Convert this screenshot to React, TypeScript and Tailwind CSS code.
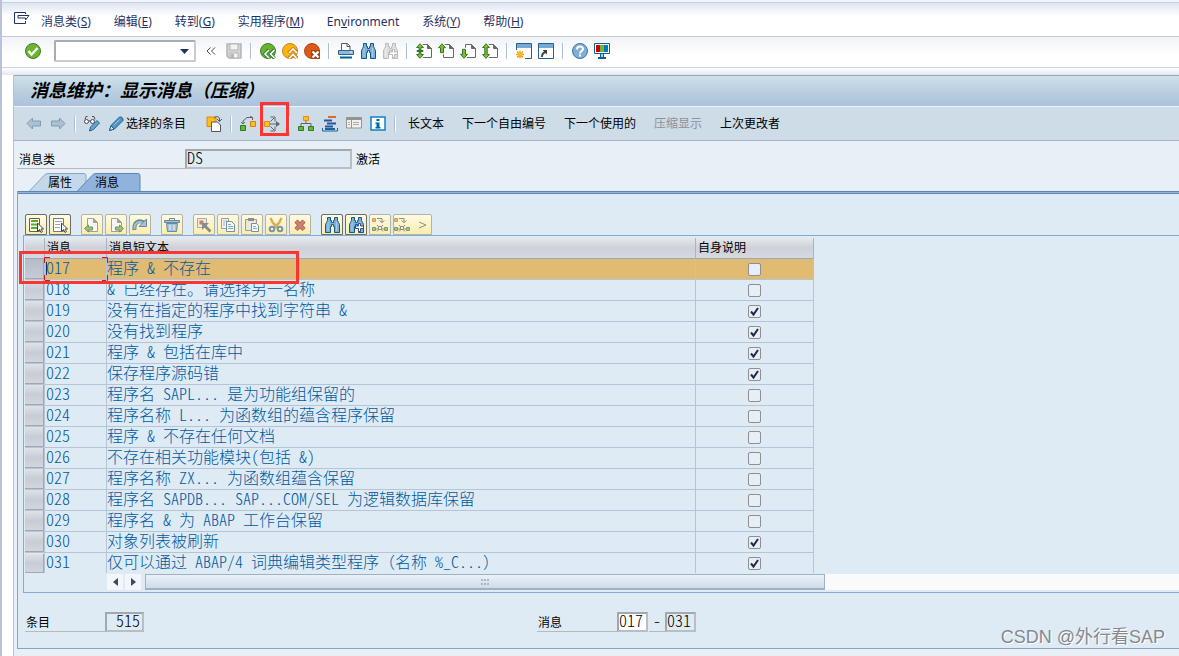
import { useState, type ReactNode } from 'react';
import clsx from 'clsx';

type MessageRow = { id: string; text: string; self: boolean };

const MESSAGES: MessageRow[] = [
  { id: '017', text: '程序 & 不存在', self: false },
  { id: '018', text: '& 已经存在。请选择另一名称', self: false },
  { id: '019', text: '没有在指定的程序中找到字符串 &', self: true },
  { id: '020', text: '没有找到程序', self: true },
  { id: '021', text: '程序 & 包括在库中', self: true },
  { id: '022', text: '保存程序源码错', self: true },
  { id: '023', text: '程序名 SAPL... 是为功能组保留的', self: false },
  { id: '024', text: '程序名称 L... 为函数组的蕴含程序保留', self: false },
  { id: '025', text: '程序 & 不存在任何文档', self: false },
  { id: '026', text: '不存在相关功能模块(包括 &)', self: false },
  { id: '027', text: '程序名称 ZX... 为函数组蕴含保留', self: false },
  { id: '028', text: '程序名 SAPDB... SAP...COM/SEL 为逻辑数据库保留', self: false },
  { id: '029', text: '程序名 & 为 ABAP 工作台保留', self: false },
  { id: '030', text: '对象列表被刷新', self: true },
  { id: '031', text: '仅可以通过 ABAP/4 词典编辑类型程序（名称 %_C...）', self: true },
];

const MENUS = [
  { label: '消息类', hotkey: 'S' },
  { label: '编辑', hotkey: 'E' },
  { label: '转到', hotkey: 'G' },
  { label: '实用程序', hotkey: 'M' },
  { label: 'Environment', hotkey: '' },
  { label: '系统', hotkey: 'Y' },
  { label: '帮助', hotkey: 'H' },
];

// Half-width latin next to full-width CJK, like a terminal grid
const GRID_TEXT = "font-['Noto_Sans_CJK_SC',sans-serif] [font-feature-settings:'hwid'] font-light text-base";

function Icon({ children, className }: { children: ReactNode; className?: string }) {
  return (
    <svg viewBox="0 0 16 16" className={clsx('h-4 w-4 shrink-0', className)} fill="none" aria-hidden="true">
      {children}
    </svg>
  );
}

function IconButton({ label, children }: { label: string; children: ReactNode }) {
  return (
    <button type="button" aria-label={label} title={label} className="relative block shrink-0">
      {children}
    </button>
  );
}

function Separator({ className }: { className?: string }) {
  return <div className={clsx('h-4 w-0.5 shrink-0 border-r border-white bg-[#a9c0d8]', className)} />;
}

/* ---------- system toolbar icons ---------- */

const OkIcon = () => (
  <Icon>
    <circle cx="8" cy="8" r="7.5" fill="#6cb52d" stroke="#3a7d33" />
    <path d="M3.5 8l3 3.5 6-6.5" stroke="#fff" strokeWidth="2.4" />
  </Icon>
);

const SaveIcon = () => (
  <Icon>
    <path d="M1 1h14v14H3l-2-2z" fill="#d3d4d5" stroke="#b3b5b8" strokeWidth="1.5" />
    <path d="M4 1h8v6H4z" fill="#f3f3f3" stroke="#b3b5b8" />
    <path d="M4 10h8v5H4z" fill="#f3f3f3" stroke="#b3b5b8" />
    <path d="M5 11h3v4H5z" fill="#b3b5b8" />
  </Icon>
);

const BackIcon = () => (
  <Icon>
    <circle cx="8" cy="8" r="7.5" fill="#69b42d" stroke="#3c8136" />
    <path d="M9 6.5L5 11l4 4.5M14.5 6.5L10.5 11l4 4.5" stroke="#3c8136" strokeWidth="3.5" />
    <path d="M9 7l-4 4 4 4M14.5 7l-4 4 4 4" stroke="#fff" strokeWidth="1.6" />
  </Icon>
);

const ExitIcon = () => (
  <Icon>
    <circle cx="8" cy="8" r="7.5" fill="#fbb50f" stroke="#cf7d16" />
    <path d="M6.5 10l4.500-4 4.500 4M6.500 15.500l4.500-4 4.500 4" stroke="#cf7d16" strokeWidth="3.5" />
    <path d="M7 10l4-4 4 4M7 15.500l4-4 4 4" stroke="#fff" strokeWidth="1.6" />
  </Icon>
);

const CancelIcon = () => (
  <Icon>
    <circle cx="8" cy="8" r="7.5" fill="#dd5914" stroke="#a84620" />
    <path d="M7 7h9v9H7z" fill="#a8431c" />
    <path d="M8.5 8.5l6 6M14.5 8.5l-6 6" stroke="#fff" strokeWidth="2.2" />
  </Icon>
);

const PrintIcon = () => (
  <Icon>
    <path d="M3.5 7V.5h6l2.500 2.500v4" fill="#fff" stroke="#595b5e" />
    <path d="M9 .5V3.500h3" stroke="#595b5e" />
    <path d="M.5 7.5h15v4H.5z" fill="#8fb8dc" stroke="#2a6691" />
    <path d="M12 8.500h2v1h-2z" fill="#fff" />
    <path d="M2 14.500h12" stroke="#00608f" strokeWidth="2" />
  </Icon>
);

function FindIcon({ dim, next }: { dim?: boolean; next?: boolean }) {
  const stroke = dim ? '#b9bbbd' : '#0b5c8a';
  const fill = dim ? '#dddedf' : '#7fb0d8';
  return (
    <Icon>
      <path
        d="M3.5.5h3v3h1v2h2v-2h1v-3h3v3l1 2 1 2v8h-5V9.500h-1v-2h-2v2h-1v6h-5v-8l1-2 1-2z"
        fill={fill}
        stroke={stroke}
      />
      <path d="M4 5v9M12.500 5v9" stroke={dim ? '#f0f0f0' : '#aacdea'} />
      {next && (
        <path
          d="M10.500 6.500h2v2.500h3v2.500h-3v3h-2v-3h-3V9h3z"
          fill="#fff"
          stroke={dim ? '#b9bbbd' : '#2d4f93'}
        />
      )}
    </Icon>
  );
}

const PAGE_ARROWS = {
  first: 'M4 .7l3.500 3.800H5v2H3v-2H.5zM4 15.300L.5 11.500H3v-2h2v2h2.500zM1 7.500h6v1H1z',
  prev: 'M4 .7l3.500 4H5.500v5h-3v-5H.5z',
  next: 'M4 15.300l3.500-4H5.500v-5h-3v5H.5z',
  last: 'M4 .7l3.500 3.800H5.200v7h2.300L4 15.300.5 11.500h2.300v-7H.5z',
};

function PageIcon({ kind }: { kind: keyof typeof PAGE_ARROWS }) {
  return (
    <Icon>
      <path d="M5.5 1.500h6l4 4v9h-10z" fill="#fff" stroke="#67696c" />
      <path d="M11.500 1.500l4 4h-4z" fill="#67696c" stroke="#67696c" />
      <path d={PAGE_ARROWS[kind]} fill="#fff" stroke="#fff" strokeWidth="3" />
      <path d={PAGE_ARROWS[kind]} fill="#82bb2d" stroke="#2f7a2c" />
    </Icon>
  );
}

const NewSessionIcon = () => (
  <Icon>
    <path d="M.5.5h15v15H.5z" fill="#fff" stroke="#23638f" />
    <path d="M1 1h14v4H1z" fill="#77a9d3" />
    <path d="M0 7h9v9H0z" fill="#fff" />
    <path d="M4 7.500v8M0 11.500h8M1 8.500l6 6M7 8.500l-6 6" stroke="#f39a0d" strokeWidth="1.300" />
    <circle cx="4" cy="11.500" r="2.300" fill="#fbb820" />
  </Icon>
);

const ShortcutIcon = () => (
  <Icon>
    <path d="M.5.5h15v15H.5z" fill="#fff" stroke="#23638f" />
    <path d="M1 1h14v4H1z" fill="#77a9d3" />
    <path d="M4 14c0-3 1-4.500 4-5" stroke="#3d3f42" strokeWidth="1.800" />
    <path d="M4.500 7h4.500v4.500z" fill="#3d3f42" />
  </Icon>
);

const HelpIcon = () => (
  <Icon>
    <circle cx="8" cy="8" r="7.5" fill="#80afd6" stroke="#3c75a3" />
    <path d="M5 6.500c0-4 6-4 6-.5 0 2-3 2-3 4.500M8 11.500v2" stroke="#fff" strokeWidth="2" />
  </Icon>
);

const MonitorIcon = () => (
  <Icon>
    <path d="M.5.5h15v10H.5z" fill="#fff" stroke="#125f8f" />
    <path d="M2 2h4v7H2z" fill="#d10000" />
    <path d="M6 2h4v7H6z" fill="#76b82a" />
    <path d="M10 2h4v7h-4z" fill="#0079c1" />
    <path d="M6 11h4v3h2v2H4v-2h2z" fill="#125f8f" />
    <path d="M7 11h2v3H7z" fill="#a8cbe6" />
  </Icon>
);

/* ---------- application toolbar icons ---------- */

function ArrowIcon({ flip }: { flip?: boolean }) {
  return (
    <Icon>
      <path
        d={flip ? 'M15 7.500L9.500 2v3H1.500v5h8v3z' : 'M1 7.500L6.500 2v3h8v5h-8v3z'}
        fill="#a9c1d1"
        stroke="#7f9db3"
      />
    </Icon>
  );
}

const DisplayChangeIcon = () => (
  <Icon>
    <path d="M1 3.500L2 .5h1.500M11 3.500L10 .5H8" stroke="#4b4d50" />
    <circle cx="2.5" cy="5.500" r="2" fill="#fff" stroke="#4b4d50" />
    <circle cx="8.5" cy="5.500" r="2" fill="#fff" stroke="#4b4d50" />
    <path d="M4.500 5h2" stroke="#4b4d50" />
    <path d="M5.500 15l1-4L13 4.500 15.500 7 9.500 13.500z" fill="#69a4d1" stroke="#22648f" />
  </Icon>
);

const PencilIcon = () => (
  <Icon>
    <path d="M1.500 14.500l1.500-5L10.500 2l1-1h2l1.500 2v1.500L6.500 13z" fill="#5595c4" stroke="#1c6292" />
    <path d="M1.500 14.500l1.500-4.500 3 3z" fill="#eaf2f8" stroke="#1c6292" />
    <path d="M6 9l5.500-5.500" stroke="#9cc5e4" />
  </Icon>
);

const CopyAsIcon = () => (
  <Icon>
    <path d="M1 1h9v9.500H1z" fill="#fdbd1d" stroke="#d88a0e" />
    <path d="M5.500 6h6l3 3v6.500h-9z" fill="#fff" stroke="#55575a" />
    <path d="M8.500 2.500c0-3 5-2.500 5 .500v2M11 3l2.500 2.500L16 3" stroke="#55575a" />
  </Icon>
);

const WhereUsedIcon = () => (
  <Icon>
    <path d="M.5 9.500h5v5h-5z" fill="#6cb32e" stroke="#2f7b2d" />
    <path d="M10.500 5.500h5v5h-5z" fill="#fcc21f" stroke="#e2761a" />
    <path d="M3 8V5l4-3.500h5.500V4M1 6l2 2 2-2M10 0l2.500 1.500" stroke="#626467" />
  </Icon>
);

const TransportIcon = () => (
  <Icon>
    <path d="M.5 5.500h5v5h-5z" fill="#fcc21f" stroke="#e58c1d" />
    <path d="M6 8h9M6.500 5.500L10 2M6.500 10.500L10 14" stroke="#626467" />
    <path d="M12 5v6l4-3z" fill="#626467" />
    <path d="M6.500 1h4.500v4.500M6.500 15h4.500v-4.500" stroke="#626467" />
  </Icon>
);

const HierarchyIcon = () => (
  <Icon>
    <path d="M8 5v3M3 11V7.500h10V11" stroke="#626467" />
    <path d="M5.500.5h5v4h-5z" fill="#fcc21f" stroke="#e58c1d" />
    <path d="M.5 10.500h5v4h-5zM10.500 10.500h5v4h-5z" fill="#6cb32e" stroke="#2f7b2d" />
  </Icon>
);

const StackIcon = () => (
  <Icon>
    <path d="M6 1h8" stroke="#dd6b22" strokeWidth="2" />
    <path d="M2 4.500h8M5 7.500h9M3 10.500h8" stroke="#2355a0" strokeWidth="2" />
    <path d="M.5 12v3h15v-3" stroke="#17639a" />
    <path d="M3 13h10" stroke="#17639a" strokeWidth="2" />
  </Icon>
);

const DetailListIcon = () => (
  <Icon>
    <path d="M.5 1.500h15v10.500H.5z" fill="#f1f0ee" stroke="#97938f" />
    <path d="M1 3h14" stroke="#97938f" strokeWidth="2" />
    <path d="M5.500 3v9" stroke="#97938f" />
    <path d="M2 6.500h2M2 8.500h2M7 6.500h6M7 8.500h6" stroke="#b0aca8" />
  </Icon>
);

const InfoIcon = () => (
  <Icon>
    <path d="M1 1h14v13H1z" fill="#fff" stroke="#0a83c6" strokeWidth="1.5" />
    <path d="M6.500 3h3v2h-3zM5.500 6.500h4v4.500h1v1.500h-5V11h1V8h-1z" fill="#0067a5" />
  </Icon>
);

/* ---------- grid toolbar icons ---------- */

const SelectAllIcon = () => (
  <Icon>
    <path d="M1.500 1.500h10v13h-10z" fill="#fff" stroke="#56702e" />
    <path d="M3 4h7M3 7.500h7M3 11h7" stroke="#5cab27" strokeWidth="2" />
    <path d="M9.500 6v8.500l2-2 1.500 3 1.500-1-1.500-2.500h2.500z" fill="#fff" stroke="#444" />
  </Icon>
);

const DeselectIcon = () => (
  <Icon>
    <path d="M1.500 1.500h10v13h-10z" fill="#fff" stroke="#77797b" />
    <path d="M3 4.500h7M3 7.500h5M3 10.500h5" stroke="#a2a4a6" />
    <path d="M9.500 6v8.500l2-2 1.500 3 1.500-1-1.500-2.500h2.500z" fill="#fff" stroke="#444" />
  </Icon>
);

function DocArrowIcon({ right }: { right?: boolean }) {
  return (
    <Icon>
      <path d="M3.500 1.500h6l4 4v9h-10z" fill="#f7f7f3" stroke="#9c9e9c" />
      <path d="M9.500 1.500v4h4" fill="#9c9e9c" stroke="#9c9e9c" />
      <path
        d={right ? 'M15.500 11.500l-4-3.500v2h-4v3h4v2z' : 'M.5 11.500l4-3.500v2h4v3h-4v2z'}
        fill="#9dc27b"
        stroke="#70965f"
      />
    </Icon>
  );
}

const RedoIcon = () => (
  <Icon>
    <path d="M2.500 13C1.500 5 7 2.500 12 5.500" stroke="#668ba1" strokeWidth="4" />
    <path d="M2.500 12C2 5.500 7 3.500 12 6.500" stroke="#a6c2d4" strokeWidth="2" />
    <path d="M14.500 2v7.500H7z" fill="#a6c2d4" stroke="#668ba1" />
  </Icon>
);

const TrashIcon = () => (
  <Icon>
    <path d="M5.500 3V1.500h5V3" stroke="#668ba1" />
    <path d="M.5 3.500h15v2H.5z" fill="#a6c2d4" stroke="#668ba1" />
    <path d="M2.500 6.500h11l-1 8h-9z" fill="#a6c2d4" stroke="#668ba1" />
    <path d="M6 8v5M10 8v5" stroke="#f5f8fa" />
  </Icon>
);

const PickIcon = () => (
  <Icon>
    <path d="M1.500 1.500h9v9h-9z" fill="#ecebe4" stroke="#aaa9a4" />
    <path d="M3.500 3.500h4v4h-4z" fill="#cf7b6b" />
    <path d="M6 6h7l-2.500 2.500 5 5-2 2-5-5L6 13z" fill="#8b8b89" />
  </Icon>
);

const CopyIcon = () => (
  <Icon>
    <path d="M1.500 1.500h7v10h-7z" fill="#f3f4f0" stroke="#8fa1ac" />
    <path d="M3 4h4M3 6h2M3 8h2" stroke="#9cb3c1" />
    <path d="M6.500 4.500h5l3 3v7h-8z" fill="#f5f6f4" stroke="#7190a3" />
    <path d="M8 7.500h3M8 9.500h5M8 11.500h5" stroke="#8aa9bb" />
  </Icon>
);

const PasteIcon = () => (
  <Icon>
    <path d="M1.500 2.500h11v11h-11z" fill="#e9e8df" stroke="#9b9b97" />
    <path d="M4 1h6v3H4z" fill="#8e8f8d" />
    <path d="M7.500 6.500h5l2 2v6h-7z" fill="#f5f6f4" stroke="#7190a3" />
    <path d="M9 9.500h3M9 11.500h4" stroke="#8aa9bb" />
  </Icon>
);

const CutIcon = () => (
  <Icon>
    <path d="M2.500 1l2.500 5 5 5M13.500 1L11 6l-5 5" stroke="#dbad55" strokeWidth="2.500" />
    <circle cx="4" cy="12" r="2.300" stroke="#7797a8" strokeWidth="2" />
    <circle cx="12" cy="12" r="2.300" stroke="#7797a8" strokeWidth="2" />
  </Icon>
);

const DeleteIcon = () => (
  <Icon>
    <path d="M4 4l8 8.500M12 4l-8 8.500" stroke="#a8675a" strokeWidth="4.500" />
    <path d="M4 4l8 8.500M12 4l-8 8.500" stroke="#cf826f" strokeWidth="2.500" />
  </Icon>
);

const ExpandIcon = () => (
  <Icon>
    <path d="M.5 1.500h3v3h-3z" fill="#f0b56f" stroke="#d39a72" />
    <path d="M.5 10.500h3v3h-3zM12.500 10.500h3v3h-3z" fill="#a6c486" stroke="#7c9c6c" />
    <path d="M5 1.500h5v4M7.500 3.500l2.500 2 2.500-2M5 8l6 6.500M11 8l-6 6.500M4 12h8" stroke="#8c8d8b" />
    <path d="M6.500 9.500h3v3h-3z" fill="#fff6cf" stroke="#8c8d8b" />
  </Icon>
);

type GridTool = { label: string; icon: ReactNode; active?: boolean; more?: boolean };

const GRID_TOOLS: GridTool[][] = [
  [
    { label: '全选', icon: <SelectAllIcon />, active: true },
    { label: '取消全选', icon: <DeselectIcon />, active: true },
  ],
  [
    { label: '上一页', icon: <DocArrowIcon /> },
    { label: '下一页', icon: <DocArrowIcon right /> },
    { label: '重做', icon: <RedoIcon /> },
  ],
  [{ label: '删除行', icon: <TrashIcon /> }],
  [
    { label: '选择', icon: <PickIcon /> },
    { label: '复制', icon: <CopyIcon /> },
    { label: '粘贴', icon: <PasteIcon /> },
    { label: '剪切', icon: <CutIcon /> },
    { label: '删除', icon: <DeleteIcon /> },
  ],
  [
    { label: '查找', icon: <FindIcon />, active: true },
    { label: '查找下一个', icon: <FindIcon next />, active: true },
    { label: '展开', icon: <ExpandIcon /> },
    { label: '更多', icon: <ExpandIcon />, more: true },
  ],
];

function MenuBar() {
  return (
    <nav className="flex h-[34px] items-center gap-[11px] border-b border-[#c3c9d3] bg-linear-to-b from-[#dde5f1] to-white to-40% pl-3 pt-1 text-[#1f3265]">
      <svg viewBox="0 0 16 12" className="-mt-2 h-3 w-4" fill="none" aria-hidden="true">
        <path d="M11.500 2V.5H.5v11h11V9" fill="#fff" stroke="#1f3265" />
        <path d="M4 3.500h11L11.500 8v-2H4z" fill="#fff" stroke="#1f3265" />
      </svg>
      <ul className="flex items-center gap-[23px]">
        {MENUS.map(menu => (
          <li key={menu.label}>
            <button type="button" className="block whitespace-nowrap leading-4">
              {menu.hotkey ? (
                <>
                  {menu.label}(<u>{menu.hotkey}</u>)
                </>
              ) : (
                <>
                  En<u>v</u>ironment
                </>
              )}
            </button>
          </li>
        ))}
      </ul>
    </nav>
  );
}

function SystemToolbar() {
  const [command, setCommand] = useState('');

  return (
    <div className="flex h-[31px] items-center gap-1.5 border-b border-[#cdd3da] bg-linear-to-b from-[#f1f3f8] to-white to-60% pb-0.5 pl-[23px]">
      <IconButton label="回车"><OkIcon /></IconButton>
      <div className="ml-[7px] flex h-[22px] w-[142px] shrink-0 items-center rounded-xs border-2 border-[#a9adb2] border-b-[#c9ccd0] border-r-[#c9ccd0] bg-white">
        <input
          aria-label="命令"
          value={command}
          onChange={e => setCommand(e.target.value)}
          className="h-full min-w-0 flex-1 px-1 outline-none"
        />
        <button type="button" aria-label="历史" className="flex h-full w-5 items-center justify-center">
          <svg viewBox="0 0 9 5" className="h-[5px] w-[9px]" aria-hidden="true">
            <path d="M0 0h9L4.500 5z" fill="#1f3265" />
          </svg>
        </button>
      </div>
      <button type="button" aria-label="收起" className="mx-1 block">
        <svg viewBox="0 0 10 8" className="h-2 w-2.5" fill="none" stroke="#4a4c50" aria-hidden="true">
          <path d="M4.500.5L1 4l3.500 3.500M9 .5L5.500 4 9 7.500" />
        </svg>
      </button>
      <IconButton label="保存"><SaveIcon /></IconButton>
      <Separator className="mx-0.5" />
      <IconButton label="返回"><BackIcon /></IconButton>
      <IconButton label="退出"><ExitIcon /></IconButton>
      <IconButton label="取消"><CancelIcon /></IconButton>
      <Separator className="mx-0.5" />
      <IconButton label="打印"><PrintIcon /></IconButton>
      <IconButton label="查找"><FindIcon /></IconButton>
      <IconButton label="查找下一个"><FindIcon dim next /></IconButton>
      <Separator className="mx-0.5" />
      <IconButton label="第一页"><PageIcon kind="first" /></IconButton>
      <IconButton label="上一页"><PageIcon kind="prev" /></IconButton>
      <IconButton label="下一页"><PageIcon kind="next" /></IconButton>
      <IconButton label="最后一页"><PageIcon kind="last" /></IconButton>
      <Separator className="mx-0.5" />
      <IconButton label="新建会话"><NewSessionIcon /></IconButton>
      <IconButton label="创建快捷方式"><ShortcutIcon /></IconButton>
      <Separator className="mx-0.5" />
      <IconButton label="帮助"><HelpIcon /></IconButton>
      <IconButton label="定制布局"><MonitorIcon /></IconButton>
    </div>
  );
}

function AppToolbar() {
  return (
    <div className="flex h-[34px] items-center gap-2 border-b border-[#a3b6cd] bg-[#cedce7] pl-3 text-black">
      <IconButton label="上一个"><ArrowIcon /></IconButton>
      <IconButton label="下一个"><ArrowIcon flip /></IconButton>
      <Separator />
      <IconButton label="显示/更改"><DisplayChangeIcon /></IconButton>
      <button type="button" className="flex items-center gap-0.5 whitespace-nowrap leading-4">
        <PencilIcon />
        选择的条目
      </button>
      <div className="w-1" />
      <IconButton label="复制为"><CopyAsIcon /></IconButton>
      <Separator />
      <IconButton label="使用处列表"><WhereUsedIcon /></IconButton>
      <IconButton label="传输">
        <TransportIcon />
        <span className="pointer-events-none absolute -left-1 -top-3.5 h-[34px] w-[29px] border-3 border-[#fb3532]" />
      </IconButton>
      <Separator />
      <IconButton label="层次"><HierarchyIcon /></IconButton>
      <IconButton label="堆栈"><StackIcon /></IconButton>
      <IconButton label="明细"><DetailListIcon /></IconButton>
      <IconButton label="信息"><InfoIcon /></IconButton>
      <Separator />
      <div className="flex gap-[18px] whitespace-nowrap pl-1 leading-4">
        <button type="button">长文本</button>
        <button type="button">下一个自由编号</button>
        <button type="button">下一个使用的</button>
        <button type="button" disabled className="text-[#8c9298]">压缩显示</button>
        <button type="button">上次更改者</button>
      </div>
    </div>
  );
}

function TabStrip() {
  return (
    <div role="tablist" className="flex pl-3 leading-4">
      <button type="button" role="tab" aria-selected="false" className="relative h-[18px] w-[58px] pl-1 pt-0.5">
        <svg viewBox="0 0 58 18" className="absolute inset-0 h-full w-full" aria-hidden="true">
          <path d="M.5 18L15 2.500Q16.500.5 19 .5H55q2 0 2 2V18" fill="#c3d8ea" stroke="#8ba6c3" />
        </svg>
        <span className="relative">属性</span>
      </button>
      <button type="button" role="tab" aria-selected="true" className="relative -ml-2.5 h-[18px] w-16 pr-1 pt-0.5">
        <svg viewBox="0 0 64 18" className="absolute inset-0 h-full w-full" aria-hidden="true">
          <path d="M.5 18L15 2.500Q16.500.5 19 .5H61q2 0 2 2V18" fill="#8fb3dc" stroke="#5f86b0" />
        </svg>
        <span className="relative">消息</span>
      </button>
    </div>
  );
}

function GridToolbar() {
  return (
    <div className="flex gap-2.5 pl-[7px]">
      {GRID_TOOLS.map((group, i) => (
        <div key={i} className="flex gap-0.5">
          {group.map(tool => (
            <button
              key={tool.label}
              type="button"
              aria-label={tool.label}
              title={tool.label}
              className={clsx(
                'flex h-[21px] items-center rounded-t-xs border bg-linear-to-b from-[#fffbe2] to-[#fbecae]',
                tool.active ? 'border-[#6f6e68]' : 'border-[#b4b3a8]',
                tool.more ? 'w-[39px] justify-between pr-1' : 'w-[22px] justify-center',
              )}
            >
              {tool.icon}
              {tool.more && (
                <svg viewBox="0 0 8 8" className="h-2 w-2" fill="none" stroke="#8f8f8a" aria-hidden="true">
                  <path d="M0 1l7 3-7 3" />
                </svg>
              )}
            </button>
          ))}
        </div>
      ))}
    </div>
  );
}

// Full-width brackets must keep their own width, so the half-width feature is off there
function MessageText({ text }: { text: string }) {
  return text.split(/([（）])/).map((part, i) =>
    part === '（' || part === '）' ? (
      <span key={i} className="[font-feature-settings:normal]">{part}</span>
    ) : (
      part
    ),
  );
}

function MessageTable() {
  const [rows, setRows] = useState(MESSAGES);

  const toggle = (id: string) =>
    setRows(rows.map(row => (row.id === id ? { ...row, self: !row.self } : row)));

  return (
    <table className="w-[789px] table-fixed border-separate border-spacing-0">
      <colgroup>
        <col className="w-5" />
        <col className="w-[62px]" />
        <col className="w-[589px]" />
        <col className="w-[118px]" />
      </colgroup>
      <thead>
        <tr className="h-[21px] text-left leading-4 text-black *:border-b *:border-r *:border-b-[#98a9bd] *:border-r-[#a9b4c2] *:bg-linear-to-b *:from-[#e6e9ec] *:via-[#cdd1d8] *:to-[#d6dae0] *:p-0 *:pl-0.5 *:font-normal">
          <th aria-label="选择" />
          <th>消息</th>
          <th>消息短文本</th>
          <th>自身说明</th>
        </tr>
      </thead>
      <tbody>
        {rows.map((row, i) => (
          <tr
            key={row.id}
            className={clsx(
              'h-[21px] text-[#00599e] *:border-b *:border-r *:border-[#b6c5d5] *:p-0 last:h-[19px] last:*:border-b-0',
              i === 0 && 'bg-[#e2bb73]',
            )}
          >
            <td className="relative">
              <button
                type="button"
                aria-label={`选择 ${row.id}`}
                className={clsx(
                  'block w-full border-b border-r border-[#a2a8b1] bg-linear-to-b',
                  i === rows.length - 1 ? 'h-[19px]' : 'h-5',
                  i === 0 ? 'from-[#b4bcc8] to-[#c6ccd6]' : 'from-[#dfe2e8] via-[#c8ccd5] to-[#d2d5dc]',
                )}
              />
              {i === 0 && (
                <span className="pointer-events-none absolute -left-1.5 -top-2 z-10 h-[33px] w-[280px] border-3 border-[#fb3532]" />
              )}
            </td>
            <td className={clsx('relative pl-px! pb-1! leading-4', GRID_TEXT)}>
              {row.id}
              {i === 0 && (
                <svg viewBox="0 0 64 24" className="absolute -left-px -top-0.5 h-6 w-16" fill="none" aria-hidden="true">
                  <path d="M6 .5H.5V6M58 .5h5.500V6M.5 18v5.500H6M63.500 18v5.500H58" stroke="#d3122a" />
                  <path d="M2.500 5v13" stroke="#12306e" />
                </svg>
              )}
            </td>
            <td className={clsx('whitespace-nowrap pb-1! leading-4', GRID_TEXT)}>
              <MessageText text={row.text} />
            </td>
            <td>
              <label className="relative mx-auto block h-[13px] w-[13px]">
                <input
                  type="checkbox"
                  aria-label={`自身说明 ${row.id}`}
                  checked={row.self}
                  onChange={() => toggle(row.id)}
                  className="block h-[13px] w-[13px] appearance-none rounded-xs border border-[#8d8f92] bg-[#e6eff6]"
                />
                {row.self && (
                  <svg viewBox="0 0 13 13" className="pointer-events-none absolute inset-0" fill="none" aria-hidden="true">
                    <path d="M3 6.500L5.500 9.500l4.500-6.500" stroke="#25254a" strokeWidth="2" />
                  </svg>
                )}
              </label>
            </td>
          </tr>
        ))}
      </tbody>
    </table>
  );
}

function HorizontalScrollbar() {
  return (
    <div className="mt-px flex h-4 items-stretch pl-[82px]">
      <button type="button" aria-label="向左" className="flex w-4 items-center justify-center bg-[#f3f6fa]">
        <svg viewBox="0 0 5 8" className="h-2 w-[5px]" aria-hidden="true">
          <path d="M5 0v8L0 4z" fill="#3b4b5c" />
        </svg>
      </button>
      <button type="button" aria-label="向右" className="ml-0.5 flex w-4 items-center justify-center bg-[#f3f6fa]">
        <svg viewBox="0 0 5 8" className="h-2 w-[5px]" aria-hidden="true">
          <path d="M0 0v8l5-4z" fill="#3b4b5c" />
        </svg>
      </button>
      <div className="ml-1 min-w-0 flex-1 bg-[#fafafa]">
        <div className="flex h-full w-[680px] items-center justify-center border border-b-2 border-[#9fb0c2] bg-linear-to-b from-[#eaf1f8] to-[#cedcea]">
          <svg viewBox="0 0 9 6" className="h-1.5 w-[9px]" aria-hidden="true">
            <path d="M0 1h2M3 1h2M6 1h2M0 5h2M3 5h2M6 5h2" stroke="#9aa9b9" strokeWidth="1.5" />
          </svg>
        </div>
      </div>
    </div>
  );
}

const FIELD =
  'h-5 border-2 border-[#a3a8ad] border-b-[#b9bec3] border-r-[#b9bec3] pb-1 pr-0.5 leading-4 text-black outline-none';

function Footer() {
  return (
    <div className="flex pl-[7px] pt-[19px] leading-4 text-black">
      <label htmlFor="entries" className="w-20 border-b border-[#b7b9bb] pl-px pt-[3px]">条目</label>
      <input id="entries" readOnly value="515" className={clsx(FIELD, GRID_TEXT, 'w-[39px] bg-[#dfebf4] text-right')} />
      <label htmlFor="from" className="ml-[393px] w-20 border-b border-[#b7b9bb] pl-px pt-[3px]">消息</label>
      <input id="from" defaultValue="017" className={clsx(FIELD, GRID_TEXT, 'w-[31px] bg-white')} />
      <label htmlFor="to" className={clsx('ml-px w-4 border-b border-[#b7b9bb] text-center leading-4', GRID_TEXT)}>-</label>
      <input id="to" readOnly value="031" className={clsx(FIELD, GRID_TEXT, 'w-[31px] bg-[#dfebf4]')} />
    </div>
  );
}

export default function App() {
  return (
    <div className="relative min-h-screen overflow-hidden border-l-2 border-[#b9c2d6] bg-white font-['Noto_Sans','Noto_Sans_CJK_SC',sans-serif] text-xs">
      <div className="h-[3px] border-b border-[#c5d2e6] bg-[#f2f5f9]" />
      <MenuBar />
      <SystemToolbar />
      <div className="h-[7px] bg-linear-to-b from-white to-[#e3e8f0]" />
      <main className="ml-[11px] min-h-[581px] border-l border-[#b4c3d3] bg-[#e8eff6] pb-2">
        <header className="flex h-8 items-center border-b border-t border-b-[#eef4f9] border-t-[#8da9c0] bg-linear-to-b from-[#cfe0ec] via-[#bad0df] to-[#abc2dd] pb-0.5 pl-4">
          <h1 className="text-lg font-bold italic leading-6 text-black">消息维护：显示消息（压缩）</h1>
        </header>
        <AppToolbar />
        <div className="flex pl-[3px] pt-2 leading-4 text-black">
          <label htmlFor="message-class" className="w-[168px] border-b border-[#b7b9bb] pl-0.5 pt-[3px]">消息类</label>
          <input id="message-class" readOnly value="DS" className={clsx(FIELD, GRID_TEXT, 'w-[167px] bg-[#dfebf4]')} />
          <span className="pl-1 pt-[3px]">激活</span>
        </div>
        <div className="pl-[3px] pt-1">
          <TabStrip />
          <section className="border-b border-l border-[#86a5c6] bg-[#deebf5]">
            <div className="h-[3px] border-b border-t border-[#5f86b0] bg-[#94b6dd]" />
            <div className="pt-5">
              <GridToolbar />
              <div className="ml-[5px] border-b border-l border-t border-[#85abcf] pb-0.5 pl-px pt-0.5">
                <MessageTable />
                <HorizontalScrollbar />
              </div>
            </div>
            <Footer />
            <div className="h-4" />
          </section>
        </div>
      </main>
      <div className="pointer-events-none absolute bottom-2 right-3.5 font-['Liberation_Sans','Noto_Sans_CJK_SC',sans-serif] text-lg leading-6 text-[#85898e] [text-shadow:1px_1px_0_#ffffff]">
        CSDN @外行看SAP
      </div>
    </div>
  );
}
